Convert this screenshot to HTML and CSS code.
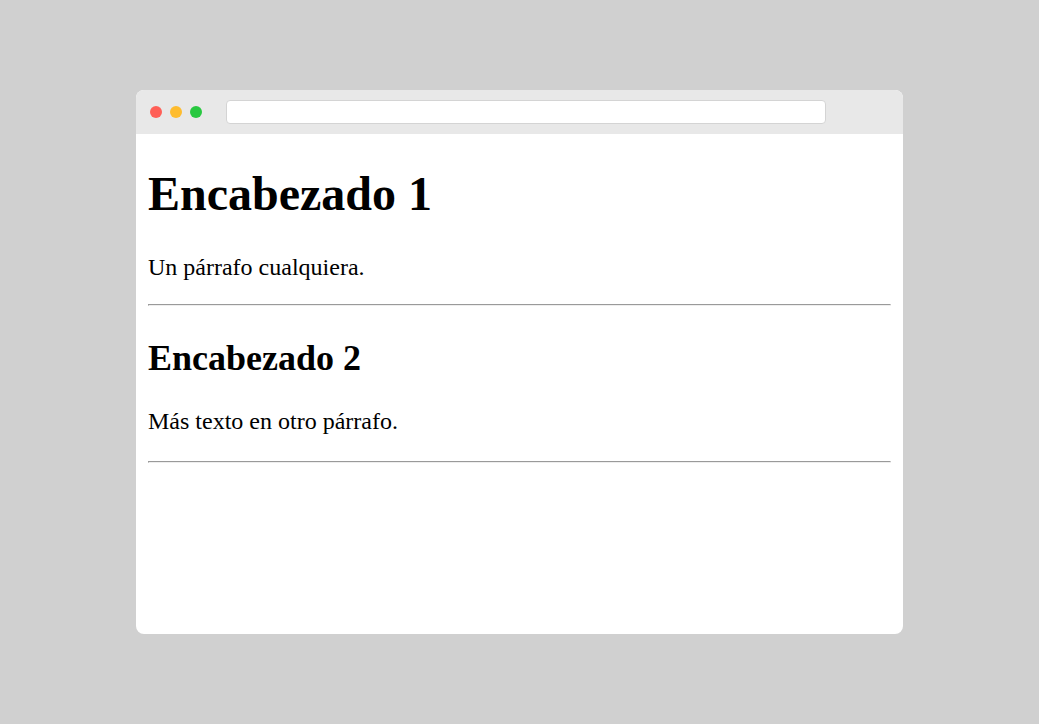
FILE: index.html
```html
<!DOCTYPE html>
<html lang="es">
<head>
<meta charset="utf-8">
<title>Vista previa</title>
<link rel="stylesheet" href="styles.css">
</head>
<body>
<div class="stage">
  <div class="window">
    <div class="titlebar">
      <span class="dot red"></span>
      <span class="dot yellow"></span>
      <span class="dot green"></span>
      <div class="address"></div>
    </div>
    <div class="content">
      <h1 class="h1">Encabezado 1</h1>
      <p class="para first">Un párrafo cualquiera.</p>
      <hr class="rule">
      <h2 class="h2">Encabezado 2</h2>
      <p class="para second">Más texto en otro párrafo.</p>
      <hr class="rule">
    </div>
  </div>
</div>
</body>
</html>
```

FILE: styles.css
```css
html, body {
  margin: 0;
  padding: 0;
  height: 100%;
}
body {
  background: #d0d0d0;
  font-family: "Liberation Serif", "Times New Roman", serif;
}
.stage {
  height: 100%;
  display: flex;
  align-items: center;
  justify-content: center;
}
.window {
  width: 767px;
  height: 544px;
  background: #ffffff;
  border-radius: 8px;
  overflow: hidden;
  display: flex;
  flex-direction: column;
}
.titlebar {
  height: 44px;
  flex: none;
  background: #e8e8e8;
  display: flex;
  align-items: center;
  padding-left: 14px;
  box-sizing: border-box;
}
.dot {
  width: 12px;
  height: 12px;
  border-radius: 50%;
  margin-right: 8px;
  flex: none;
}
.red { background: #ff5f57; }
.yellow { background: #febc2e; }
.green { background: #28c840; }
.address {
  margin-left: 16px;
  width: 600px;
  height: 24px;
  box-sizing: border-box;
  background: #ffffff;
  border: 1px solid #d4d4d4;
  border-radius: 4px;
}
.content {
  padding: 32px 12px 12px 12px;
  color: #000;
}
.h1 {
  font-size: 48px;
  font-weight: bold;
  margin: 0 0 32px 0;
  line-height: 55px;
}
.h2 {
  font-size: 36px;
  font-weight: bold;
  margin: 32px 0 28px 0;
  line-height: 41px;
}
.para {
  font-size: 24px;
  margin: 0;
  line-height: 28px;
}
.first { margin-bottom: 23px; }
.second { margin-bottom: 26px; }
.rule {
  margin: 0;
  height: 0;
  border: none;
  border-top: 1px solid #9a9a9a;
  border-bottom: 1px solid #eeeeee;
  border-left: 1px solid #9a9a9a;
  border-right: 1px solid #eeeeee;
}
```
